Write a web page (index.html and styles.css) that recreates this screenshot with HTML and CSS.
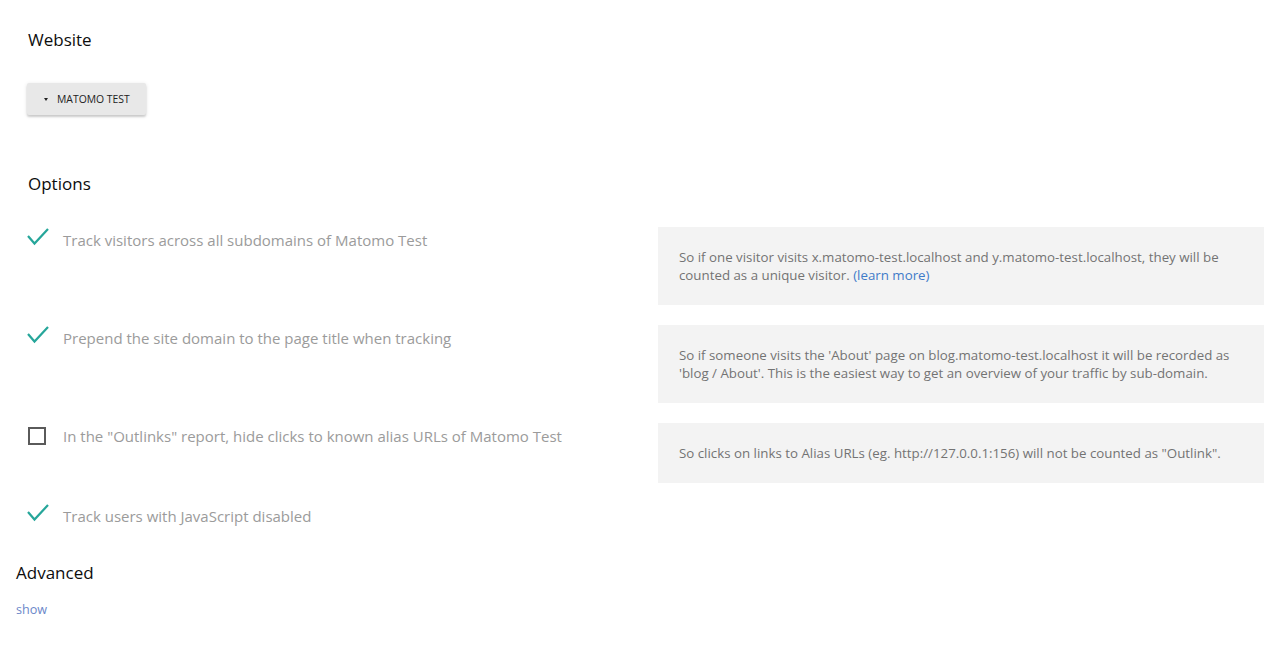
FILE: index.html
```html
<!DOCTYPE html>
<html>
<head>
<meta charset="utf-8">
<link rel="stylesheet" href="styles.css">
</head>
<body>
<div class="page">
  <div class="section">
    <h3 class="title">Website</h3>
    <div class="site-select">
      <span class="caret"></span>
      <span class="site-name">MATOMO TEST</span>
    </div>

    <h3 class="title options-title">Options</h3>

    <div class="opt-row">
      <div class="opt-left">
        <svg class="check" width="22" height="20" viewBox="0 0 22 20"><polyline points="1,8 7.5,15.5 21,1" fill="none" stroke="#26a69a" stroke-width="2.2"/></svg>
        <span class="opt-label">Track visitors across all subdomains of Matomo Test</span>
      </div>
      <div class="opt-help">So if one visitor visits x.matomo-test.localhost and y.matomo-test.localhost, they will be counted as a unique visitor. <a class="link" href="#">(learn more)</a></div>
    </div>

    <div class="opt-row">
      <div class="opt-left">
        <svg class="check" width="22" height="20" viewBox="0 0 22 20"><polyline points="1,8 7.5,15.5 21,1" fill="none" stroke="#26a69a" stroke-width="2.2"/></svg>
        <span class="opt-label">Prepend the site domain to the page title when tracking</span>
      </div>
      <div class="opt-help">So if someone visits the 'About' page on blog.matomo-test.localhost it will be recorded as 'blog / About'. This is the easiest way to get an overview of your traffic by sub-domain.</div>
    </div>

    <div class="opt-row">
      <div class="opt-left">
        <span class="box"></span>
        <span class="opt-label">In the "Outlinks" report, hide clicks to known alias URLs of Matomo Test</span>
      </div>
      <div class="opt-help">So clicks on links to Alias URLs (eg. http://127.0.0.1:156) will not be counted as "Outlink".</div>
    </div>

    <div class="opt-row last">
      <div class="opt-left">
        <svg class="check" width="22" height="20" viewBox="0 0 22 20"><polyline points="1,8 7.5,15.5 21,1" fill="none" stroke="#26a69a" stroke-width="2.2"/></svg>
        <span class="opt-label">Track users with JavaScript disabled</span>
      </div>
    </div>
  </div>

  <h3 class="title advanced">Advanced</h3>
  <a class="show" href="#">show</a>
</div>
</body>
</html>
```

FILE: styles.css
```css
* { box-sizing: border-box; }
html, body { margin: 0; padding: 0; background: #fff; }
body {
  font-family: "Open Sans", "Noto Sans", sans-serif;
  color: #0d0d0d;
}
.page {
  padding: 27px 22px 0 16px;
}
.section {
  padding-left: 12px;
}
.title {
  margin: 0;
  font-size: 17px;
  font-weight: 400;
  line-height: 26px;
  color: #0d0d0d;
}
.site-select {
  display: inline-flex;
  align-items: center;
  margin-top: 30px;
  margin-left: -1px;
  height: 32px;
  padding: 0 16px 0 17px;
  background: #e8e8e8;
  border-radius: 2px;
  box-shadow: 0 2px 2px 0 rgba(0,0,0,0.14), 0 1px 4px 0 rgba(0,0,0,0.12);
  font-size: 10.4px;
  color: #222;
}
.caret {
  width: 0;
  height: 0;
  border-left: 2.5px solid transparent;
  border-right: 2.5px solid transparent;
  border-top: 3px solid #222;
  margin-right: 9px;
}
.options-title {
  margin-top: 56px;
  margin-bottom: 30px;
}
.opt-row {
  display: flex;
  align-items: flex-start;
  margin-bottom: 20px;
}
.opt-row.last { margin-bottom: 0; }
.opt-left {
  flex: 1;
  display: flex;
  align-items: center;
  padding-top: 1px;
  min-height: 24px;
}
.opt-label {
  font-size: 15px;
  color: #9b9b9b;
  line-height: 24px;
  padding-left: 14px;
}
.check {
  display: block;
  flex: none;
  margin-left: -1px;
  margin-top: -4px;
}
.box {
  display: block;
  flex: none;
  width: 18px;
  height: 18px;
  border: 2px solid #5a5a5a;
  margin-right: 3px;
  margin-top: -1px;
}
.opt-help {
  width: 606px;
  flex: none;
  background: #f3f3f3;
  padding: 21px 21px;
  font-size: 13.3px;
  line-height: 18px;
  color: #737373;
}
.link { color: #3f7bc9; text-decoration: none; }
.advanced {
  margin-top: 32px;
}
.show {
  display: inline-block;
  margin-top: 15px;
  font-size: 12.6px;
  color: #6b87c9;
  text-decoration: none;
}
```
